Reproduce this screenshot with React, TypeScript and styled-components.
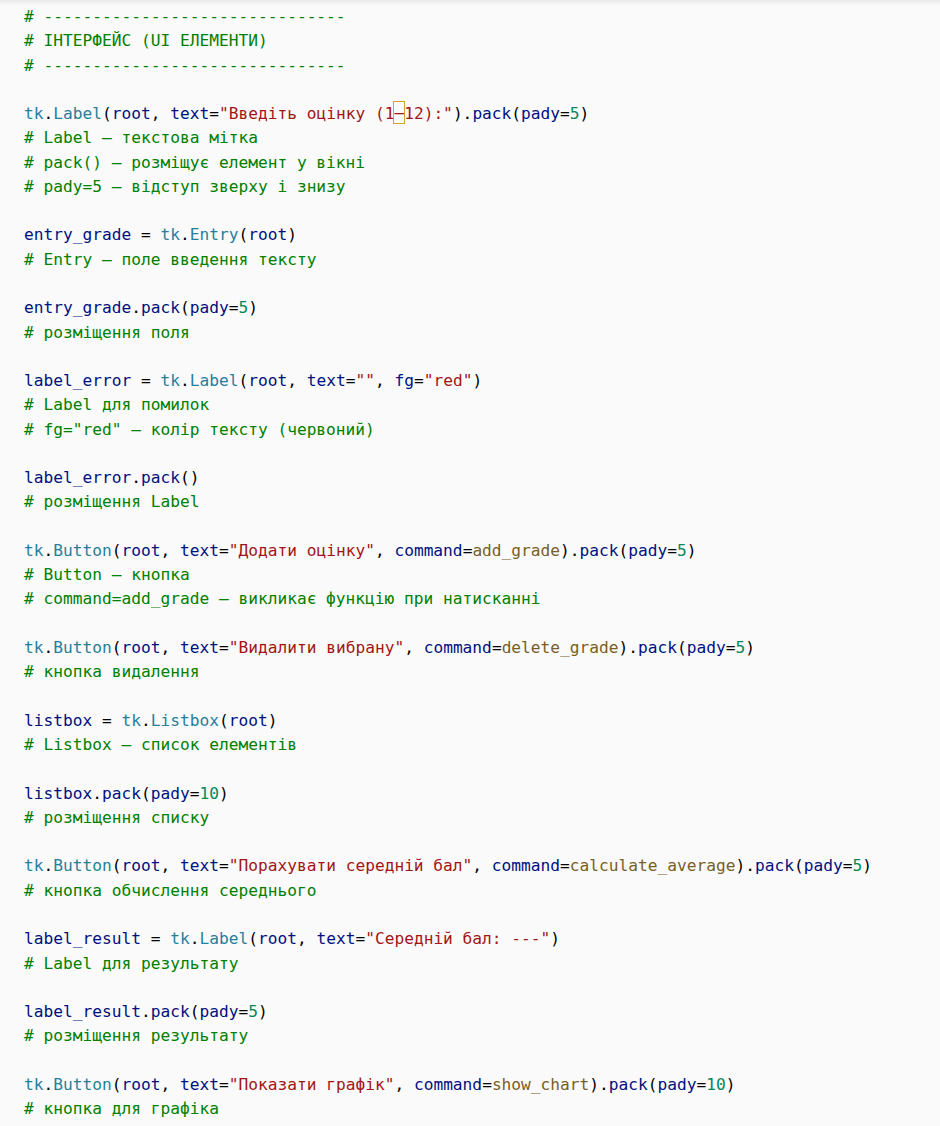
import React from "react";
import styled, { createGlobalStyle } from "styled-components";

const Global = createGlobalStyle`
  html, body { margin: 0; padding: 0; background: #fafafa; }
  #root { min-height: 1126px; }
`;

type Kind = "c" | "s" | "m" | "v" | "n" | "f" | "p" | "k";

const colors: Record<Kind, string> = {
  c: "#008000",
  s: "#a31515",
  m: "#267f99",
  v: "#001080",
  n: "#098658",
  f: "#795e26",
  p: "#000000",
  k: "#0000ff",
};

const Editor = styled.div`
  position: relative;
  width: 940px;
  min-height: 1126px;
  box-sizing: border-box;
  padding: 5px 0 0 24px;
  background: #fafafa;
  font-family: "DejaVu Sans Mono", "Liberation Mono", monospace;
  font-size: 16.2px;
  white-space: pre;
  &::before {
    content: "";
    position: absolute;
    left: 0;
    right: 0;
    top: 0;
    height: 6px;
    background: linear-gradient(#e9e9e9, rgba(250, 250, 250, 0));
  }
`;

const Line = styled.div<{ $top: number }>`
  height: 24px;
  line-height: 24px;
  margin-top: ${(p) => p.$top}px;
`;

const Tok = styled.span<{ $k: Kind }>`
  color: ${(p) => colors[p.$k]};
`;

const Bracket = styled.span`
  color: #a31515;
  outline: 1px solid #d4a03c;
  display: inline-block;
  height: 21px;
  line-height: 21px;
  vertical-align: top;
`;

type T = [Kind, string] | ["box", string];

const DASH = "# " + "-".repeat(31);
const c = (t: string): T[] => [["c", t]];
const pk = (n: string): T[] => [
  ["p", ")."],
  ["v", "pack"],
  ["p", "("],
  ["v", "pady"],
  ["p", "="],
  ["n", n],
  ["p", ")"],
];

const lines: T[][] = [
  c(DASH),
  c("# ІНТЕРФЕЙС (UI ЕЛЕМЕНТИ)"),
  c(DASH),
  [],
  [
    ["m", "tk"], ["p", "."], ["m", "Label"], ["p", "("], ["v", "root"], ["p", ", "],
    ["v", "text"], ["p", "="], ["s", "\"Введіть оцінку (1"], ["box", "–"], ["s", "12):\""],
    ...pk("5"),
  ],
  c("# Label – текстова мітка"),
  c("# pack() – розміщує елемент у вікні"),
  c("# pady=5 – відступ зверху і знизу"),
  [],
  [["v", "entry_grade"], ["p", " = "], ["m", "tk"], ["p", "."], ["m", "Entry"], ["p", "("], ["v", "root"], ["p", ")"]],
  c("# Entry – поле введення тексту"),
  [],
  [["v", "entry_grade"], ["p", "."], ["v", "pack"], ["p", "("], ["v", "pady"], ["p", "="], ["n", "5"], ["p", ")"]],
  c("# розміщення поля"),
  [],
  [
    ["v", "label_error"], ["p", " = "], ["m", "tk"], ["p", "."], ["m", "Label"], ["p", "("], ["v", "root"], ["p", ", "],
    ["v", "text"], ["p", "="], ["s", "\"\""], ["p", ", "], ["v", "fg"], ["p", "="], ["s", "\"red\""], ["p", ")"],
  ],
  c("# Label для помилок"),
  c("# fg=\"red\" – колір тексту (червоний)"),
  [],
  [["v", "label_error"], ["p", "."], ["v", "pack"], ["p", "()"]],
  c("# розміщення Label"),
  [],
  [
    ["m", "tk"], ["p", "."], ["m", "Button"], ["p", "("], ["v", "root"], ["p", ", "],
    ["v", "text"], ["p", "="], ["s", "\"Додати оцінку\""], ["p", ", "], ["v", "command"], ["p", "="], ["f", "add_grade"],
    ...pk("5"),
  ],
  c("# Button – кнопка"),
  c("# command=add_grade – викликає функцію при натисканні"),
  [],
  [
    ["m", "tk"], ["p", "."], ["m", "Button"], ["p", "("], ["v", "root"], ["p", ", "],
    ["v", "text"], ["p", "="], ["s", "\"Видалити вибрану\""], ["p", ", "], ["v", "command"], ["p", "="], ["f", "delete_grade"],
    ...pk("5"),
  ],
  c("# кнопка видалення"),
  [],
  [["v", "listbox"], ["p", " = "], ["m", "tk"], ["p", "."], ["m", "Listbox"], ["p", "("], ["v", "root"], ["p", ")"]],
  c("# Listbox – список елементів"),
  [],
  [["v", "listbox"], ["p", "."], ["v", "pack"], ["p", "("], ["v", "pady"], ["p", "="], ["n", "10"], ["p", ")"]],
  c("# розміщення списку"),
  [],
  [
    ["m", "tk"], ["p", "."], ["m", "Button"], ["p", "("], ["v", "root"], ["p", ", "],
    ["v", "text"], ["p", "="], ["s", "\"Порахувати середній бал\""], ["p", ", "], ["v", "command"], ["p", "="], ["f", "calculate_average"],
    ...pk("5"),
  ],
  c("# кнопка обчислення середнього"),
  [],
  [
    ["v", "label_result"], ["p", " = "], ["m", "tk"], ["p", "."], ["m", "Label"], ["p", "("], ["v", "root"], ["p", ", "],
    ["v", "text"], ["p", "="], ["s", "\"Середній бал: ---\""], ["p", ")"],
  ],
  c("# Label для результату"),
  [],
  [["v", "label_result"], ["p", "."], ["v", "pack"], ["p", "("], ["v", "pady"], ["p", "="], ["n", "5"], ["p", ")"]],
  c("# розміщення результату"),
  [],
  [
    ["m", "tk"], ["p", "."], ["m", "Button"], ["p", "("], ["v", "root"], ["p", ", "],
    ["v", "text"], ["p", "="], ["s", "\"Показати графік\""], ["p", ", "], ["v", "command"], ["p", "="], ["f", "show_chart"],
    ...pk("10"),
  ],
  c("# кнопка для графіка"),
];

// integer line tops: distribute 24.27px pitch as 24/25 px steps
const tops = lines.map((_, i) => (i === 0 ? 0 : Math.round(i * 24.27) - Math.round((i - 1) * 24.27) - 24));

export default function App() {
  return (
    <>
      <Global />
      <Editor>
        {lines.map((ln, i) => (
          <Line key={i} $top={tops[i]}>
            {ln.length === 0
              ? " "
              : ln.map(([k, t], j) =>
                  k === "box" ? (
                    <Bracket key={j}>{t}</Bracket>
                  ) : (
                    <Tok key={j} $k={k as Kind}>
                      {t}
                    </Tok>
                  )
                )}
          </Line>
        ))}
      </Editor>
    </>
  );
}
